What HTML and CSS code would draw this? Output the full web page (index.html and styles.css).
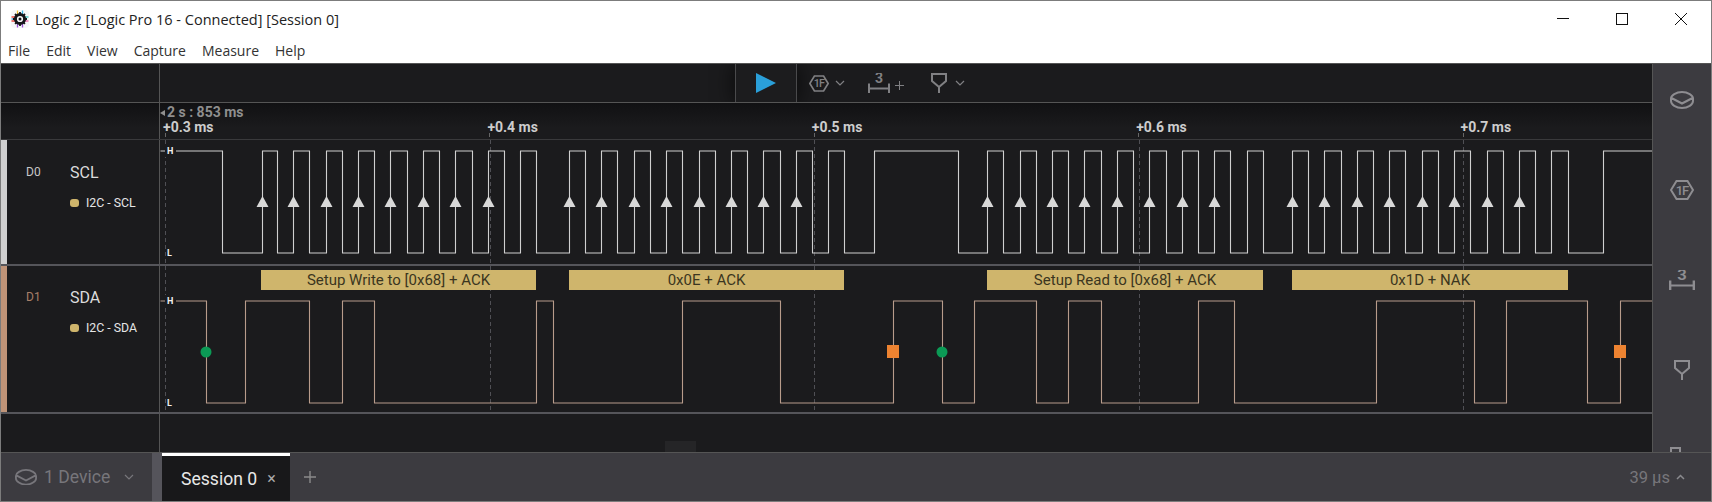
FILE: index.html
```html
<!DOCTYPE html>
<html lang="en">
<head>
    <meta charset="UTF-8">
    <title>Logic 2 [Logic Pro 16 - Connected] [Session 0]</title>
    <link rel="stylesheet" href="styles.css">
</head>
<body>
    <svg class="sprite">
        <symbol id="i-hex" viewBox="0 0 24 20">
            <path d="M6.5 1H17.5L23 10L17.5 19H6.5L1 10Z" fill="none" stroke="currentColor" stroke-width="2"/>
            <text class="hex-text" x="12" y="14.500" text-anchor="middle" fill="currentColor">1F</text>
        </symbol>
        <symbol id="i-measure" viewBox="0 0 22 20">
            <text class="measure-text" x="11" y="10" text-anchor="middle" fill="currentColor">3</text>
            <path d="M1 10.500V20M21 10.500V20M1 15.500H21" fill="none" stroke="currentColor" stroke-width="2"/>
        </symbol>
        <symbol id="i-filter" viewBox="0 0 16 20">
            <path d="M1 1H15V8L8 14L1 8ZM8 14V20" fill="none" stroke="currentColor" stroke-width="2"/>
        </symbol>
        <symbol id="i-device" viewBox="0 0 24 18">
            <path d="M12 1C6 1 1 4.500 1 7.500V10C1 13.500 6 17 12 17C18 17 23 13.500 23 10V7.500C23 4.500 18 1 12 1ZM1.500 7L12 12.500L22.500 7" fill="none" stroke="currentColor" stroke-width="2"/>
        </symbol>
        <symbol id="i-chevron" viewBox="0 0 10 6">
            <path d="M1 1L5 5L9 1" fill="none" stroke="currentColor" stroke-width="1.200"/>
        </symbol>
    </svg>

    <div class="window">
        <div class="titlebar">
            <svg class="logo" viewBox="0 0 20 20">
                <rect x="1" y="1" width="18" height="18" rx="4" fill="#f7f7f9"/>
                <path d="M1.500 8H5M1.500 12H5" stroke="#e8483f" stroke-width="1.300"/>
                <path d="M1.500 10H5" stroke="#2f9fe0" stroke-width="1.300"/>
                <path d="M7.500 1.500V5" stroke="#f2c230" stroke-width="1.300"/>
                <path d="M12.500 1.500V5" stroke="#38b6e8" stroke-width="1.300"/>
                <path d="M15 8H18.500" stroke="#35c4c0" stroke-width="1.300"/>
                <path d="M15 12H18.500" stroke="#e85aa0" stroke-width="1.300"/>
                <path d="M7.500 15V18.500M12.500 15V18.500" stroke="#9a50d8" stroke-width="1.300"/>
                <circle cx="10" cy="10" r="4.600" fill="none" stroke="#15151a" stroke-width="3"/>
                <path d="M10 3V17M3 10H17M5 5L15 15M15 5L5 15" stroke="#15151a" stroke-width="1.800" stroke-dasharray="2.500 9 2.500"/>
                <circle cx="10" cy="10" r="1.500" fill="#15151a"/>
            </svg>
            <span class="title">Logic 2 [Logic Pro 16 - Connected] [Session 0]</span>
            <div class="win-buttons">
                <svg width="12" height="12" viewBox="0 0 12 12"><path d="M0 5.500H12" stroke="#111"/></svg>
                <svg width="12" height="12" viewBox="0 0 12 12"><rect x="0.500" y="0.500" width="11" height="11" fill="none" stroke="#111"/></svg>
                <svg width="12" height="12" viewBox="0 0 12 12"><path d="M0 0L12 12M12 0L0 12" stroke="#111"/></svg>
            </div>
        </div>
        <div class="menubar">
            <span>File</span>
            <span>Edit</span>
            <span>View</span>
            <span>Capture</span>
            <span>Measure</span>
            <span>Help</span>
        </div>

        <div class="main">
            <div class="tracks">
                <div class="row toolbar-row">
                    <div class="label-col"></div>
                    <div class="tools">
                        <div class="play-cell">
                            <svg width="20" height="20" viewBox="0 0 20 20"><path d="M0 0L20 10L0 20Z" fill="#2a9fd9"/></svg>
                        </div>
                        <svg class="tool-hex" width="20" height="17"><use href="#i-hex"/></svg>
                        <svg class="tool-chev" width="10" height="6"><use href="#i-chevron"/></svg>
                        <svg class="tool-measure" width="22" height="20"><use href="#i-measure"/></svg>
                        <svg class="tool-plus" width="9" height="9" viewBox="0 0 9 9"><path d="M0 4.500H9M4.500 0V9" stroke="currentColor"/></svg>
                        <svg class="tool-filter" width="16" height="20"><use href="#i-filter"/></svg>
                        <svg class="tool-chev2" width="10" height="6"><use href="#i-chevron"/></svg>
                    </div>
                </div>

                <div class="row ruler-row">
                    <div class="label-col"></div>
                    <div class="ruler">
                        <div class="origin"><i class="origin-arrow"></i>2 s : 853 ms</div>
                        <div class="ticks">
                            <span class="tick">+0.3 ms</span>
                            <span class="tick">+0.4 ms</span>
                            <span class="tick">+0.5 ms</span>
                            <span class="tick">+0.6 ms</span>
                            <span class="tick">+0.7 ms</span>
                        </div>
                    </div>
                </div>

                <div class="row channel scl">
                    <div class="label-col">
                        <div class="ch-head"><span class="ch-num">D0</span><span class="ch-name">SCL</span></div>
                        <div class="analyzer"><i class="dot"></i>I2C - SCL</div>
                    </div>
                    <svg class="wave" width="1492" height="124" viewBox="160 140 1492 124">
                        <path class="grid" d="M165.500 140V264M490.500 140V264M814.500 140V264M1139.500 140V264M1463.500 140V264"/>
                        <path class="sig-scl" d="M160.500 151H222.500V253H262.500V151H277.500V253H293.500V151H309.500V253H326.500V151H342.500V253H358.500V151H374.500V253H390.500V151H407.500V253H423.500V151H439.500V253H455.500V151H472.500V253H488.500V151H504.500V253H520.500V151H536.500V253H569.500V151H585.500V253H601.500V151H617.500V253H634.500V151H650.500V253H666.500V151H682.500V253H699.500V151H715.500V253H731.500V151H747.500V253H763.500V151H780.500V253H796.500V151H812.500V253H828.500V151H844.500V253H874.500V151H958.500V253H987.500V151H1003.500V253H1020.500V151H1036.500V253H1052.500V151H1068.500V253H1084.500V151H1101.500V253H1117.500V151H1133.500V253H1149.500V151H1166.500V253H1182.500V151H1198.500V253H1214.500V151H1230.500V253H1247.500V151H1263.500V253H1292.500V151H1308.500V253H1324.500V151H1341.500V253H1357.500V151H1373.500V253H1389.500V151H1405.500V253H1422.500V151H1438.500V253H1454.500V151H1470.500V253H1487.500V151H1503.500V253H1519.500V151H1535.500V253H1551.500V151H1568.500V253H1603.500V151H1652"/>
                        <path class="arrows" d="M262.500 196l6 11h-12zM293.500 196l6 11h-12zM326.500 196l6 11h-12zM358.500 196l6 11h-12zM390.500 196l6 11h-12zM423.500 196l6 11h-12zM455.500 196l6 11h-12zM488.500 196l6 11h-12zM569.500 196l6 11h-12zM601.500 196l6 11h-12zM634.500 196l6 11h-12zM666.500 196l6 11h-12zM699.500 196l6 11h-12zM731.500 196l6 11h-12zM763.500 196l6 11h-12zM796.500 196l6 11h-12zM987.500 196l6 11h-12zM1020.500 196l6 11h-12zM1052.500 196l6 11h-12zM1084.500 196l6 11h-12zM1117.500 196l6 11h-12zM1149.500 196l6 11h-12zM1182.500 196l6 11h-12zM1214.500 196l6 11h-12zM1292.500 196l6 11h-12zM1324.500 196l6 11h-12zM1357.500 196l6 11h-12zM1389.500 196l6 11h-12zM1422.500 196l6 11h-12zM1454.500 196l6 11h-12zM1487.500 196l6 11h-12zM1519.500 196l6 11h-12z"/>
                        <rect class="hl-bg" x="165" y="145" width="11" height="12"/>
                        <text class="hl" x="167" y="154">H</text>
                        <text class="hl" x="167" y="256">L</text>
                    </svg>
                </div>

                <div class="row channel sda">
                    <div class="label-col">
                        <div class="ch-head"><span class="ch-num">D1</span><span class="ch-name">SDA</span></div>
                        <div class="analyzer"><i class="dot"></i>I2C - SDA</div>
                    </div>
                    <svg class="wave" width="1492" height="146" viewBox="160 266 1492 146">
                        <path class="grid" d="M165.500 266V412M490.500 266V412M814.500 266V412M1139.500 266V412M1463.500 266V412"/>
                        <rect class="bubble" x="261" y="270" width="275" height="20"/>
                        <rect class="bubble" x="569" y="270" width="275" height="20"/>
                        <rect class="bubble" x="987" y="270" width="276" height="20"/>
                        <rect class="bubble" x="1292" y="270" width="276" height="20"/>
                        <text class="bubble-text" x="398.500" y="285" text-anchor="middle">Setup Write to [0x68] + ACK</text>
                        <text class="bubble-text" x="706.500" y="285" text-anchor="middle">0x0E + ACK</text>
                        <text class="bubble-text" x="1125" y="285" text-anchor="middle">Setup Read to [0x68] + ACK</text>
                        <text class="bubble-text" x="1430" y="285" text-anchor="middle">0x1D + NAK</text>
                        <path class="sig-sda" d="M160.500 301H206.500V403H245.500V301H309.500V403H342.500V301H374.500V403H536.500V301H553.500V403H682.500V301H780.500V403H893.500V301H942.500V403H974.500V301H1036.500V403H1068.500V301H1101.500V403H1198.500V301H1234.500V403H1376.500V301H1474.500V403H1506.500V301H1587.500V403H1620.500V301H1652"/>
                        <circle class="start" cx="206" cy="352" r="5.500"/>
                        <circle class="start" cx="942" cy="352" r="5.500"/>
                        <rect class="stop" x="887" y="345" width="12" height="13"/>
                        <rect class="stop" x="1614" y="345" width="12" height="13"/>
                        <rect class="hl-bg" x="165" y="295" width="11" height="12"/>
                        <text class="hl" x="167" y="304">H</text>
                        <text class="hl" x="167" y="406">L</text>
                    </svg>
                </div>

                <div class="row empty-row">
                    <div class="label-col"></div>
                    <div class="handle-area"><div class="handle"></div></div>
                </div>
            </div>

            <div class="side">
                <svg width="24" height="18"><use href="#i-device"/></svg>
                <svg width="24" height="22"><use href="#i-hex"/></svg>
                <svg width="26" height="20" viewBox="0 0 22 20" preserveAspectRatio="none"><use href="#i-measure" width="22" height="20"/></svg>
                <svg width="16" height="20"><use href="#i-filter"/></svg>
                <svg class="side-clip" width="24" height="24" viewBox="0 0 24 24"><path d="M1 1H10V12H1Z" fill="none" stroke="currentColor" stroke-width="2"/></svg>
            </div>
        </div>

        <div class="bottombar">
            <div class="device-tab">
                <svg class="device-icon" width="22" height="16.500"><use href="#i-device"/></svg>
                <span>1 Device</span>
                <svg class="device-chev" width="10" height="6"><use href="#i-chevron"/></svg>
            </div>
            <div class="session-tab">
                <span>Session 0</span>
                <span class="tab-close">×</span>
            </div>
            <svg class="add-tab" width="12" height="12" viewBox="0 0 12 12"><path d="M0 6H12M6 0V12" stroke="currentColor" stroke-width="1.400"/></svg>
            <div class="status">
                <span>39 µs</span>
                <svg width="9" height="6" viewBox="0 0 9 6"><path d="M1 5L4.500 1.500L8 5" fill="none" stroke="#8a8a8e" stroke-width="1.500"/></svg>
            </div>
        </div>
    </div>
</body>
</html>
```

FILE: styles.css
```css
* {
    box-sizing: border-box;
}

body {
    margin: 0;
    background: #fff;
    font-family: Roboto, "Liberation Sans", sans-serif;
}

.sprite {
    display: none;
}

.window {
    display: flex;
    flex-direction: column;
    width: 1712px;
    height: 502px;
    border: 1px solid #7c7c7c;
    overflow: hidden;
}

/* title and menu */
.titlebar {
    display: flex;
    align-items: center;
    flex: none;
    height: 38px;
    padding: 0 0 2px 9px;
    background: #fff;
}

.logo {
    width: 20px;
    height: 20px;
}

.title {
    margin-left: 5px;
    font-family: "Open Sans", sans-serif;
    font-size: 14.5px;
    color: #222;
}

.win-buttons {
    display: flex;
    gap: 47px;
    margin-left: auto;
    margin-right: 24px;
}

.menubar {
    display: flex;
    align-items: center;
    gap: 16px;
    flex: none;
    height: 24px;
    padding: 0 0 2px 7px;
    font-family: "Open Sans", sans-serif;
    font-size: 14px;
    color: #333;
    background: #fff;
}

/* main area */
.main {
    display: flex;
    flex: 1;
    min-height: 0;
    border-top: 1px solid #555;
}

.tracks {
    display: flex;
    flex-direction: column;
    flex: none;
    width: 1651px;
    background: #1b1b1d;
}

.row {
    display: flex;
    flex: none;
}

.label-col {
    flex: none;
    width: 159px;
    border-right: 1px solid #555;
}

.toolbar-row {
    height: 39px;
    border-bottom: 1px solid #555;
    overflow: hidden;
}

.tools {
    display: flex;
    align-items: center;
    color: #808083;
}

.play-cell {
    display: flex;
    align-items: center;
    justify-content: center;
    width: 62px;
    height: 39px;
    margin-left: 575px;
    background: #1c1c1e;
    border-left: 1px solid #4a4a4c;
    border-right: 1px solid #4a4a4c;
    box-shadow: 0 0 22px rgba(0, 0, 0, 0.7);
}

.tool-hex {
    margin-left: 12px;
}

.tool-chev {
    margin-left: 6px;
}

.tool-measure {
    margin-left: 23px;
}

.tool-plus {
    margin-left: 5px;
    margin-top: 4px;
}

.tool-filter {
    margin-left: 27px;
}

.tool-chev2 {
    margin-left: 8px;
}

.ruler-row {
    height: 37px;
    border-bottom: 1px solid #3a3a3c;
    background: linear-gradient(#111113, #1b1b1d 70%);
}

.ruler {
    flex: 1;
    padding-top: 2px;
    font-size: 14px;
    font-weight: 700;
    line-height: 15px;
}

.origin {
    display: flex;
    align-items: center;
    gap: 2px;
    color: #8f8f8f;
}

.origin-arrow {
    width: 0;
    height: 0;
    border-top: 3px solid transparent;
    border-bottom: 3px solid transparent;
    border-right: 5px solid #8f8f8f;
}

.ticks {
    display: flex;
    padding-left: 3px;
    color: #cdcdcd;
}

.tick {
    position: relative;
    flex: none;
    width: 324.4px;
}

.tick::after {
    content: "";
    position: absolute;
    left: 2px;
    top: 13px;
    height: 4px;
    border-left: 1px solid #666;
}

/* channels */
.channel {
    border-bottom: 2px solid #55555a;
}

.scl {
    height: 126px;
}

.sda {
    height: 148px;
}

.channel .label-col {
    padding: 22px 0 0 19px;
    border-left: 6px solid #d0d0d0;
}

.sda .label-col {
    border-left-color: #c09478;
    padding-top: 21px;
}

.ch-head {
    display: flex;
    align-items: center;
    height: 20px;
}

.ch-num {
    width: 44px;
    font-size: 12px;
    color: #c8c8c8;
}

.sda .ch-num {
    color: #a87f68;
}

.ch-name {
    font-size: 16px;
    color: #dcdcdc;
}

.analyzer {
    display: flex;
    align-items: center;
    gap: 7px;
    margin: 14px 0 0 44px;
    font-size: 12.3px;
    color: #e6e6e6;
}

.dot {
    width: 9px;
    height: 8px;
    border-radius: 3px;
    background: #cfb56c;
}

.wave {
    display: block;
    flex: none;
}

.grid {
    fill: none;
    stroke: #505055;
    stroke-dasharray: 4 3;
}

.sig-scl {
    fill: none;
    stroke: #d0d0d0;
    stroke-width: 1.1;
}

.sig-sda {
    fill: none;
    stroke: #b89c8b;
    stroke-width: 1.1;
}

.arrows {
    fill: #d8d8d8;
}

.hl-bg {
    fill: #1b1b1d;
}

.hl {
    font-size: 9px;
    font-weight: 700;
    fill: #f0f0f0;
}

.bubble {
    fill: #cfb56c;
}

.bubble-text {
    font-size: 15px;
    fill: #3b3520;
}

.start {
    fill: #0b9a55;
}

.stop {
    fill: #ed8331;
}

.empty-row {
    flex: 1;
}

.handle-area {
    display: flex;
    align-items: flex-end;
    flex: 1;
}

.handle {
    width: 31px;
    height: 11px;
    margin-left: 505px;
    background: #252527;
}

/* right sidebar */
.side {
    display: flex;
    flex-direction: column;
    align-items: center;
    gap: 69.5px;
    flex: 1;
    padding-top: 27px;
    overflow: hidden;
    color: #8e8d91;
    background: #3c3b40;
    border-left: 1px solid #555;
}

.side-clip {
    flex: none;
    margin-top: -2px;
}

.side svg {
    flex: none;
}

.hex-text {
    font-size: 13px;
    font-weight: 500;
    letter-spacing: -1px;
}

.measure-text {
    font-size: 14px;
    font-weight: 700;
}

/* bottom bar */
.bottombar {
    display: flex;
    align-items: center;
    flex: none;
    height: 49px;
    color: #77767b;
    background: #3c3b40;
    border-top: 1px solid #555;
}

.device-tab {
    display: flex;
    align-items: center;
    flex: none;
    width: 161px;
    height: 100%;
    padding-left: 14px;
    font-size: 17.6px;
    border-right: 10px solid #55545b;
}

.device-icon {
    margin-right: 7px;
}

.device-chev {
    margin-left: 14px;
}

.session-tab {
    display: flex;
    align-items: center;
    flex: none;
    width: 128px;
    height: 100%;
    padding-left: 19px;
    font-size: 17.6px;
    color: #e8e8e8;
    background: #18181a;
    border-top: 3px solid #fff;
}

.tab-close {
    margin-left: 10px;
    font-size: 16px;
    color: #aaa;
}

.add-tab {
    margin-left: 14px;
    color: #8a8a8a;
}

.status {
    display: flex;
    align-items: center;
    gap: 6px;
    margin-left: auto;
    margin-right: 26px;
    font-size: 16.5px;
}
```
